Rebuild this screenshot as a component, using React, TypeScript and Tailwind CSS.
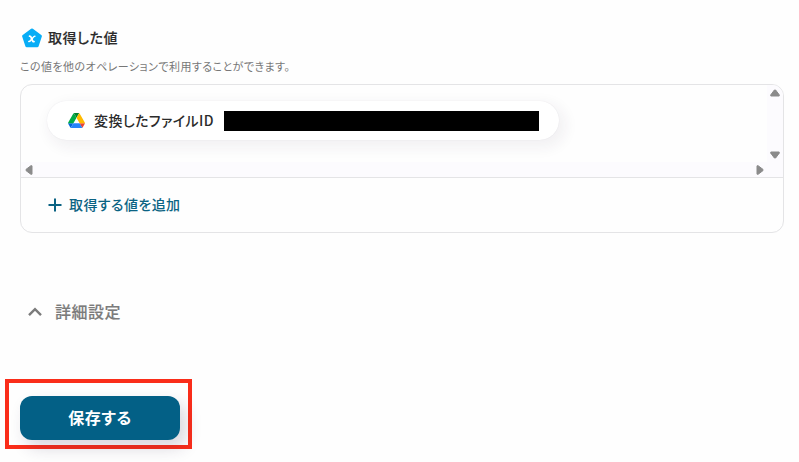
import React from 'react';

// pentagon badge with the italic "x"
const ValueBadge: React.FC = () => (
  <div className="relative flex h-5 w-5 shrink-0 items-center justify-center">
    <svg viewBox="0 0 20 20" className="absolute inset-0 h-5 w-5" fill="#08adf6" stroke="#08adf6" strokeWidth="3" strokeLinejoin="round">
      <path d="M10 2 L18.4 8.1 L15.2 17.8 H4.8 L1.6 8.1 Z" />
    </svg>
    <svg viewBox="0 0 20 20" className="absolute inset-0 h-5 w-5" fill="none" stroke="#fff" strokeLinecap="round">
      <path d="M7.6 8.2 C10 7.6 9.4 14.4 12 13.6" strokeWidth="1.8" />
      <path d="M12.8 8.2 C11.2 7.8 8.8 13.8 6.8 13.6" strokeWidth="1.5" />
    </svg>
  </div>
);

const DriveLogo: React.FC = () => (
  <svg viewBox="0 0 87.3 78" className="h-[15px] w-[17px] shrink-0">
    <path fill="#0066da" d="m6.6 66.85 3.85 6.65c.8 1.4 1.95 2.5 3.3 3.3l13.75-23.8h-27.5c0 1.55.4 3.1 1.2 4.5z" />
    <path fill="#00ac47" d="m43.65 25-13.75-23.8c-1.35.8-2.5 1.9-3.3 3.3l-25.4 44a9.06 9.06 0 0 0 -1.2 4.5h27.5z" />
    <path fill="#ea4335" d="m73.55 76.8c1.35-.8 2.5-1.9 3.3-3.3l1.6-2.75 7.65-13.25c.8-1.4 1.2-2.95 1.2-4.5h-27.502l5.852 11.5z" />
    <path fill="#00832d" d="m43.65 25 13.75-23.8c-1.35-.8-2.9-1.2-4.5-1.2h-18.5c-1.6 0-3.15.45-4.5 1.2z" />
    <path fill="#2684fc" d="m59.8 53h-32.3l-13.75 23.8c1.35.8 2.9 1.2 4.5 1.2h50.8c1.6 0 3.15-.45 4.5-1.2z" />
    <path fill="#ffba00" d="m73.4 26.5-12.7-22c-.8-1.4-1.95-2.5-3.3-3.3l-13.75 23.8 16.15 28h27.45c0-1.55-.4-3.1-1.2-4.5z" />
  </svg>
);

const Arrow: React.FC<{ className: string }> = ({ className }) => (
  <svg viewBox="0 0 10 8" className={`h-2 w-2.5 ${className}`} fill="#8b8b8b" stroke="#8b8b8b" strokeLinejoin="round">
    <path d="M4.4 1 H5.6 L9.2 5.8 V7 H0.8 V5.8 Z" />
  </svg>
);

const App: React.FC = () => {
  return (
    <div className="h-[462px] w-[799px] overflow-hidden bg-[#fefefe] pt-7 pl-5 font-['Noto_Sans_CJK_JP',sans-serif] text-[#2b2b2b]">
      <div className="flex h-5 items-center gap-1.5 pl-0.5">
        <ValueBadge />
        <h2 className="-mt-0.5 text-sm font-medium tracking-[0.04em] whitespace-nowrap [-webkit-text-stroke:0.15px_currentColor] [font-feature-settings:'palt']">
          取得した値
        </h2>
      </div>
      <p className="mt-2.5 mb-2.5 h-4 text-[11px] leading-4 tracking-[0.04em] whitespace-nowrap text-[#777] [font-feature-settings:'palt']">
        この値を他のオペレーションで利用することができます。
      </p>

      <div className="h-[149px] w-[764px] overflow-hidden rounded-xl border border-[#e4e4e6]">
        {/* scroll area */}
        <div className="flex h-[93px] flex-col border-b border-[#e4e4e6]">
          <div className="flex h-[77px]">
            <div className="flex-1 pt-4 pl-[26px]">
              <div className="flex h-[39px] w-[512px] items-center rounded-full bg-white pl-[21px] shadow-[0_0_1px_rgba(50,40,70,0.12),4px_5px_14px_3px_rgba(50,40,70,0.06)]">
                <DriveLogo />
                <span className="-mt-0.5 ml-[9px] w-[130px] text-sm font-medium tracking-[0.03em] whitespace-nowrap [font-feature-settings:'palt']">
                  変換したファイルID
                </span>
                <div className="h-5 w-[315px] bg-black" />
              </div>
            </div>
            <div className="flex w-4 flex-col items-center justify-between bg-[#fcfbfe] pt-1 pb-[3px]">
              <Arrow className="" />
              <Arrow className="rotate-180" />
            </div>
          </div>
          <div className="flex flex-1 items-center justify-between bg-[#fcfbfe] pr-[18px] pl-[3px]">
            <Arrow className="-rotate-90" />
            <Arrow className="rotate-90" />
          </div>
        </div>

        <button type="button" className="flex h-[53px] items-center gap-[7px] pl-[27px] text-sm font-medium text-[#0b6383]">
          <svg viewBox="0 0 14 14" className="h-3.5 w-3.5" stroke="currentColor" strokeWidth="2">
            <path d="M7 0.5 V13.5 M0.5 7 H13.5" />
          </svg>
          <span className="-mt-px tracking-[0.03em] [font-feature-settings:'palt']">取得する値を追加</span>
        </button>
      </div>

      <button type="button" className="mt-[67px] flex h-6 items-center gap-[13px] pl-2 text-base font-medium text-[#7b7b7b]">
        <svg viewBox="0 0 14 10" className="h-2.5 w-3.5" fill="none" stroke="currentColor" strokeWidth="2.4">
          <path d="M1 8.2 L7 2.2 L13 8.2" />
        </svg>
        <span className="-mt-0.5 tracking-[0.03em] [-webkit-text-stroke:0.15px_currentColor] [font-feature-settings:'palt']">詳細設定</span>
      </button>

      <div className="mt-[55px] -ml-[15px] h-[70px] w-[187px] border-4 border-[#fa2d1a] pt-[13px] pl-[11px]">
        <button type="button" className="flex h-11 w-40 items-center justify-center rounded-xl bg-[#036086] text-base font-bold text-white shadow-[6px_8px_16px_rgba(50,40,80,0.18)]">
          <span className="-mt-0.5 tracking-[0.04em] [font-feature-settings:'palt']">保存する</span>
        </button>
      </div>
    </div>
  );
};

export default App;
